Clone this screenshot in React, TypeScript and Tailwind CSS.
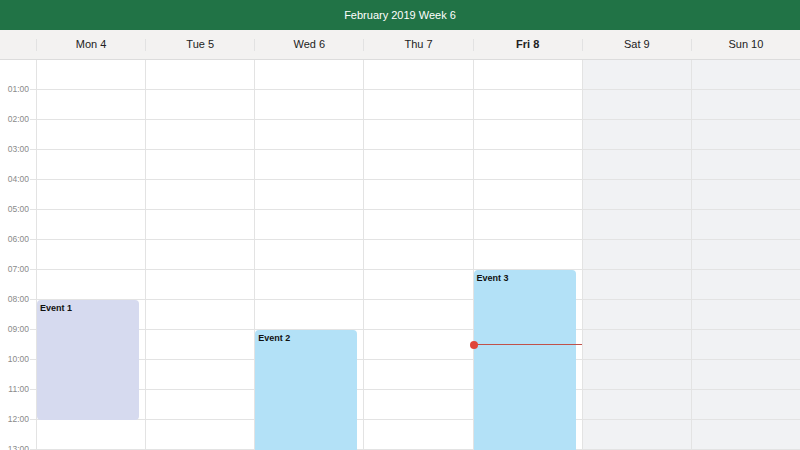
import React from "react";

const days = [
  { label: "Mon 4", weekend: false, bold: false },
  { label: "Tue 5", weekend: false, bold: false },
  { label: "Wed 6", weekend: false, bold: false },
  { label: "Thu 7", weekend: false, bold: false },
  { label: "Fri 8", weekend: false, bold: true },
  { label: "Sat 9", weekend: true, bold: false },
  { label: "Sun 10", weekend: true, bold: false },
];

const hours = Array.from({ length: 14 }, (_, i) => i);

function pad(n: number) {
  return n < 10 ? "0" + n : "" + n;
}

export default function App() {
  return (
    <div
      className="w-[800px] h-[450px] overflow-hidden flex flex-col bg-white"
      style={{ fontFamily: '"Liberation Sans", Arial, sans-serif' }}
    >
      <div className="h-[30px] shrink-0 bg-[#217346] flex items-center justify-center text-white text-[11px]">
        February 2019 Week 6
      </div>
      <div className="h-[30px] shrink-0 bg-[#f3f2f1] border-b border-[#dcdcdc] flex">
        <div className="w-[36px] shrink-0" />
        {days.map((d) => (
          <div key={d.label} className="flex-1 flex items-center relative">
            <div className="w-px h-[12px] bg-[#e2e2e2]" />
            <div
              className={
                "flex-1 text-center text-[11px] text-[#222] " +
                (d.bold ? "font-bold" : "")
              }
            >
              {d.label}
            </div>
          </div>
        ))}
      </div>
      <div className="flex flex-1 overflow-hidden">
        <div className="w-[36px] shrink-0 pt-[14px]">
          {hours.slice(1).map((h) => (
            <div key={h} className="h-[30px] flex items-center justify-end">
              <span className="text-[8.5px] text-[#8a8a8a] leading-none">
                {pad(h)}:00
              </span>
              <span className="w-[6px] h-px bg-[#e3e3e3] ml-px" />
            </div>
          ))}
        </div>
        {days.map((d, i) => (
          <div
            key={d.label}
            className={
              "flex-1 relative border-l border-[#e3e3e3] " +
              (d.weekend ? "bg-[#f1f2f4]" : "bg-white")
            }
          >
            {hours.map((h) => (
              <div key={h} className="h-[30px] border-b border-[#e3e3e3]" />
            ))}
            {i === 0 && (
              <div className="absolute left-0 right-[6px] top-[240px] h-[120px] bg-[#d6daef] rounded-[4px] px-[3px] pt-[2px] text-[9px] font-bold text-[#111]">
                Event 1
              </div>
            )}
            {i === 2 && (
              <div className="absolute left-0 right-[6px] top-[270px] h-[200px] bg-[#b3e1f7] rounded-[4px] px-[3px] pt-[2px] text-[9px] font-bold text-[#111]">
                Event 2
              </div>
            )}
            {i === 4 && (
              <>
                <div className="absolute left-0 right-[6px] top-[210px] h-[300px] bg-[#b3e1f7] rounded-[4px] px-[3px] pt-[2px] text-[9px] font-bold text-[#111]">
                  Event 3
                </div>
                <div className="absolute left-0 right-0 top-[284px] h-px bg-[#c0514a]" />
                <div className="absolute left-[-4px] top-[281px] w-[8px] h-[8px] rounded-full bg-[#e0463a]" />
              </>
            )}
          </div>
        ))}
      </div>
    </div>
  );
}
